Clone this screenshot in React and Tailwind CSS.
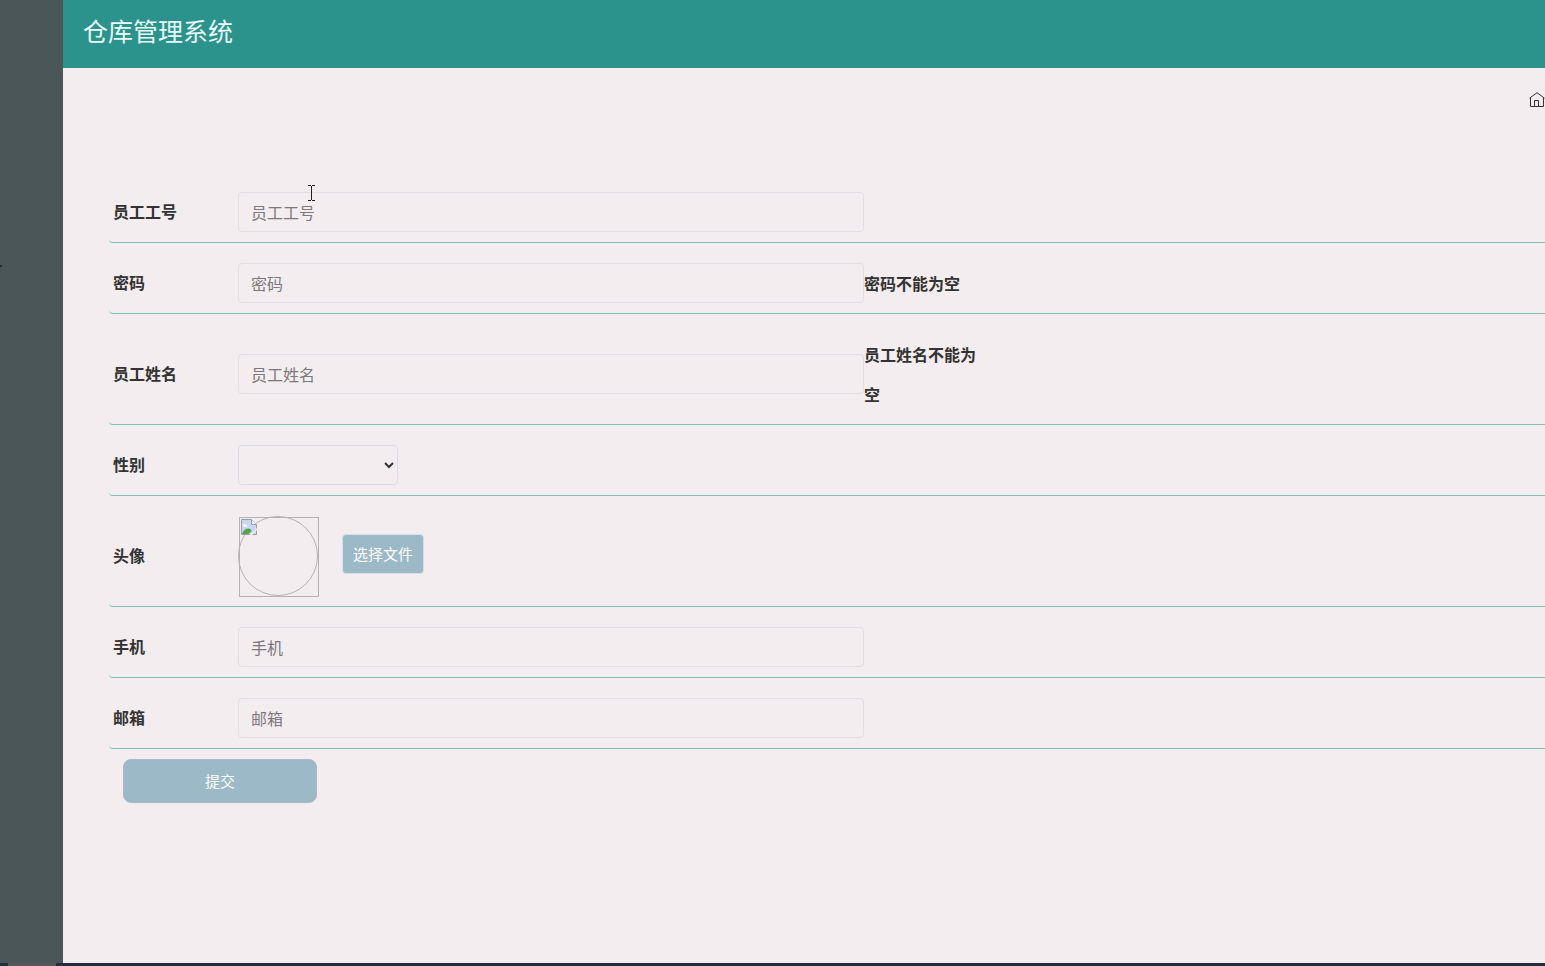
import React, { useRef, useState } from 'react';

const inputClass =
    'h-10 w-[626px] max-w-full rounded-sm border border-[#e3dde6] bg-transparent px-3 py-0.5 text-base text-[#333] placeholder:text-[#7c787d] focus:outline-none';

const FormRow = ({ id, label, message, children }) => (
    <div className="flex items-center rounded-l border-b border-[#83bdb8] pt-5 pb-2.5">
        <label htmlFor={id} className="w-[129px] shrink-0 pb-0.5 pl-1 font-bold">
            {label}
        </label>
        {children}
        {message && <p className="w-[125px] font-bold leading-10">{message}</p>}
    </div>
);

const HomeIcon = () => (
    <svg className="h-4 w-4" viewBox="0 0 16 16" fill="none" stroke="currentColor" strokeWidth="1">
        <path d="M0.5 6.2 8 0.7l7.5 5.5M1.5 5.4v9.1h13V5.4" />
        <path d="M5.5 14.5v-6h4v6" />
    </svg>
);

const BrokenImageIcon = () => (
    <svg className="h-4 w-4" viewBox="0 0 16 16">
        <path d="M0.5 0.5H10.5L15.5 5.5V15.5H0.5Z" fill="#c6d8f2" stroke="#9b9ca5" />
        <path d="M2 6.5C2 5 4.2 4.8 4.8 5.8 6.4 5.6 6.8 7.4 5.6 7.7H2.4Z" fill="#fff" />
        <path d="M1 15C2.2 11 5.5 9 8 9.6 9.6 10 10.4 11 10.7 12L7.5 15Z" fill="#55a24b" />
        <path d="M10.5 0.5V5.5H15.5" fill="#fff" stroke="#9b9ca5" />
        <path d="M8.5 16 16 9V11L11 16Z" fill="#f3edef" />
    </svg>
);

const TextCursor = () => (
    <svg
        className="pointer-events-none absolute left-[308px] top-[185px] h-4 w-[7px]"
        viewBox="0 0 7 16"
        fill="none"
        stroke="#222"
    >
        <path d="M0 0.5H3M4 0.5H7M3.5 1V15M0 15.5H3M4 15.5H7" />
    </svg>
);

const App = () => {
    const [gender, setGender] = useState('');
    const fileRef = useRef(null);

    return (
        <div className="relative flex min-h-screen flex-col bg-[#f3edef] font-['Noto_Sans_CJK_SC',sans-serif] text-base text-[#333]">
            <div className="flex grow">
                <aside className="flex w-[63px] shrink-0 flex-col bg-[#4a5658] pt-[265px]">
                    <span className="h-0.5 w-0.5 bg-[#1f2b35]" />
                </aside>
                <div className="min-w-0 grow">
                    <header className="h-[68px] bg-[#2b938b] px-5 pt-2.5">
                        <h1 className="text-[25px] leading-10 text-[#e8fafa]">仓库管理系统</h1>
                    </header>
                    <nav className="flex justify-end pt-6">
                        <a href="#" aria-label="首页" className="text-[#333]">
                            <HomeIcon />
                        </a>
                    </nav>
                    <form className="pt-16 pl-[46px]" onSubmit={(e) => e.preventDefault()}>
                        <FormRow id="code" label="员工工号">
                            <input id="code" type="text" placeholder="员工工号" className={inputClass} />
                        </FormRow>
                        <FormRow id="password" label="密码" message="密码不能为空">
                            <input id="password" type="password" placeholder="密码" className={inputClass} />
                        </FormRow>
                        <FormRow id="name" label="员工姓名" message="员工姓名不能为空">
                            <input id="name" type="text" placeholder="员工姓名" className={inputClass} />
                        </FormRow>
                        <FormRow id="gender" label="性别">
                            <select
                                id="gender"
                                value={gender}
                                onChange={(e) => setGender(e.target.value)}
                                className="h-10 w-40 rounded-sm border border-[#dddbe8] bg-transparent"
                            >
                                <option value=""></option>
                                <option value="男">男</option>
                                <option value="女">女</option>
                            </select>
                        </FormRow>
                        <FormRow id="avatar" label="头像">
                            <div className="relative h-20 w-20">
                                <div className="h-20 w-20 rounded-full border border-[#b5b1b5]" />
                                <div className="absolute top-px left-px h-20 w-20 border border-[#b5b1b5] p-px">
                                    <BrokenImageIcon />
                                </div>
                            </div>
                            <input id="avatar" ref={fileRef} type="file" className="hidden" />
                            <button
                                type="button"
                                onClick={() => fileRef.current.click()}
                                className="mb-1 ml-6 h-10 w-[82px] rounded border border-[#d5dfe5] bg-[#9bb9c7] text-[15px] text-white"
                            >
                                选择文件
                            </button>
                        </FormRow>
                        <FormRow id="phone" label="手机">
                            <input id="phone" type="text" placeholder="手机" className={inputClass} />
                        </FormRow>
                        <FormRow id="email" label="邮箱">
                            <input id="email" type="text" placeholder="邮箱" className={inputClass} />
                        </FormRow>
                        <button
                            type="submit"
                            className="mt-2.5 ml-3.5 h-11 w-[194px] rounded-lg border border-[#a9b9c8] bg-[#9bb9c7] text-[15px] text-white"
                        >
                            提交
                        </button>
                    </form>
                </div>
            </div>
            <footer className="h-[3px] bg-[#252f3c] pl-2">
                <div className="h-full w-12 bg-[#55555c]" />
            </footer>
            <TextCursor />
        </div>
    );
};

export default App;
